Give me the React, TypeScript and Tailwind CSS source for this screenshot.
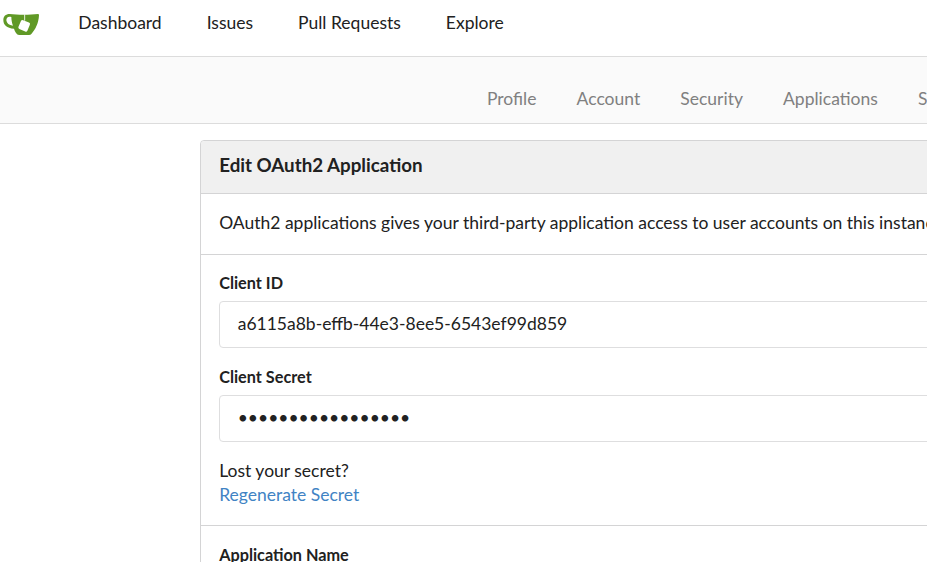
import React from "react";

const Logo = () => (
  <svg width="40" height="36" viewBox="0 0 120 108" className="block shrink-0">
    <path
      fillRule="evenodd"
      fill="#609926"
      d="M29 42 C52 45 90 45 114 42 Q117 42 117 46 C116 68 107 88 94 102 Q92 105 87 105 H57 Q52 105 48 99 Q44 93 42 86 C20 85 10 75 10 60 C10 49 17 42 29 42Z M34 51 C24 48 19 53 19 61 C20 70 27 76 39 77 C36 70 34 60 34 51Z"
    />
    <path d="M74 43 V62" stroke="#fff" strokeWidth="2.6" fill="none" />
    <rect x="58" y="63" width="29" height="29" rx="5" transform="rotate(23 72.5 77.5)" fill="#fff" />
  </svg>
);

const Field = ({ label, value }: { label: string; value: string }) => (
  <div>
    <label className="block text-[16.25px] font-bold leading-[18px]">{label}</label>
    <div className="mt-[9px] flex h-[47px] items-center rounded border border-[#dededf] bg-white px-[17.5px] pb-[2px] text-[17.5px]">{value}</div>
  </div>
);

export default function App() {
  return (
    <div className="h-[562px] w-[927px] overflow-hidden bg-white font-['Lato',sans-serif] text-[17.5px] leading-[24px] text-[#212121]">
      <header className="flex h-[57px] border-b border-[#dcdcdc]">
        <Logo />
        <nav className="ml-[38.3px] flex gap-[45px] whitespace-nowrap pt-[11px]">
          <span>Dashboard</span><span>Issues</span><span>Pull Requests</span><span>Explore</span>
        </nav>
      </header>
      <nav className="flex h-[67px] gap-[40.1px] whitespace-nowrap border-b border-[#dcdcdc] bg-[#fafafa] pl-[487px] pt-[30px] text-[#808080]">
        <span>Profile</span><span>Account</span><span>Security</span><span>Applications</span><span>SSH / GPG Keys</span>
      </nav>
      <main className="ml-[200px] mt-[16px] w-[1240px] rounded-t border border-[#d4d4d5]">
        <h1 className="h-[53px] rounded-t border-b border-[#d4d4d5] bg-[#f0f0f0] px-[18.2px] pt-[12px] text-[18.75px] font-bold">Edit OAuth2 Application</h1>
        <p className="h-[61px] whitespace-nowrap border-b border-[#d4d4d5] px-[18.2px] pt-[17px]">OAuth2 applications gives your third-party application access to user accounts on this instance.</p>
        <section className="flex h-[271px] flex-col gap-[20px] border-b border-[#d4d4d5] px-[18.2px] pt-[19px]">
          <Field label="Client ID" value="a6115a8b-effb-44e3-8ee5-6543ef99d859" />
          <Field label="Client Secret" value="•••••••••••••••••" />
          <div className="-mt-[3px]">
            <p>Lost your secret?</p>
            <a className="text-[#4183c4]">Regenerate Secret</a>
          </div>
        </section>
        <section className="h-[100px] px-[18.2px] pt-[20px]">
          <label className="block text-[16.25px] font-bold leading-[18px]">Application Name</label>
        </section>
      </main>
    </div>
  );
}
